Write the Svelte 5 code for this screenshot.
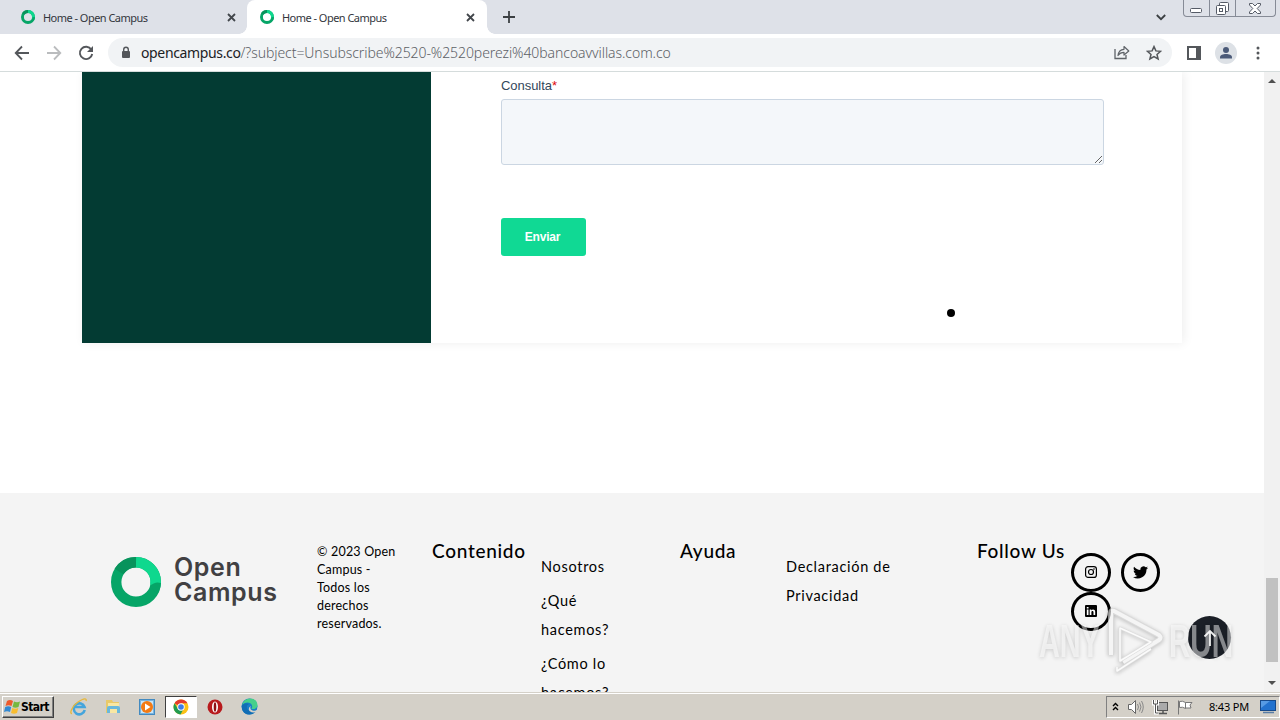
<script lang="ts">
  const tabs = [
    { title: 'Home - Open Campus', active: false },
    { title: 'Home - Open Campus', active: true }
  ];

  const contentLinks = ['Nosotros', '¿Qué hacemos?', '¿Cómo lo hacemos?'];
</script>

{#snippet ring(size: number)}
  <svg width={size} height={size} viewBox="0 0 50 50">
    <circle cx="25" cy="25" r="19.8" fill="none" stroke="#06a567" stroke-width="10.4" />
    <path d="M25 5.2A19.8 19.8 0 0 1 44.6 26.5" fill="none" stroke="#0fd88e" stroke-width="10.4" />
    <path d="M8 14.5A19.8 19.8 0 0 1 25 5.2" fill="none" stroke="#08935c" stroke-width="10.4" />
    <circle cx="44.5" cy="26.5" r="5.2" fill="#0fd88e" />
    <path d="M39 29q5-5 11-3-1 8-4 11z" fill="#06a567" />
  </svg>
{/snippet}

<div class="screen">
  <header class="tabstrip">
    {#each tabs as tab}
      <div class="tab" class:active={tab.active}>
        {@render ring(14)}
        <span class="tab-title">{tab.title}</span>
        <svg class="tab-close" width="9" height="9" viewBox="0 0 9 9"><path d="M1 1l7 7M8 1L1 8" stroke="#42464b" stroke-width="1.8" /></svg>
      </div>
    {/each}
    <svg class="new-tab" width="12" height="12" viewBox="0 0 12 12"><path d="M6 0v12M0 6h12" stroke="#3c4043" stroke-width="1.8" /></svg>
    <svg class="tab-search" width="10" height="7" viewBox="0 0 10 7"><path d="M.8 1l4.2 4.2L9.2 1" fill="none" stroke="#3c4043" stroke-width="1.8" /></svg>
    <div class="window-controls">
      <span class="ctl min"><svg width="13" height="5" viewBox="0 0 13 5"><rect x=".5" y=".5" width="11" height="4" rx="1" fill="#fff" stroke="#555b66" /></svg></span>
      <span class="ctl max"><svg width="13" height="13" viewBox="0 0 13 13"><rect x="3.500" y=".5" width="9" height="9" rx="1" fill="#fff" stroke="#555b66" /><rect x=".5" y="3.500" width="9" height="9" rx="1" fill="#fff" stroke="#555b66" /><rect x="3.500" y="6.500" width="3" height="3" fill="#fff" stroke="#555b66" /></svg></span>
      <span class="ctl close"><svg width="12" height="11" viewBox="0 0 12 11"><path d="M.5.5h3L6 3 8.500.5h3v1.500L8.200 5.500l3.300 3.500v1.500h-3L6 8l-2.500 2.500h-3V9l3.300-3.500L.5 2z" fill="#fff" stroke="#555b66" /></svg></span>
    </div>
  </header>

  <div class="toolbar">
    <div class="nav">
      <svg width="16" height="16" viewBox="0 0 16 16"><path d="M15 8H2M8 1.500L1.700 8 8 14.500" fill="none" stroke="#54575b" stroke-width="1.8" /></svg>
      <svg width="16" height="16" viewBox="0 0 16 16"><path d="M1 8h13M8 1.500L14.300 8 8 14.500" fill="none" stroke="#babcbe" stroke-width="1.8" /></svg>
      <svg width="16" height="16" viewBox="0 0 16 16"><path d="M13.300 4.500A6.200 6.200 0 1 0 14.200 9" fill="none" stroke="#54575b" stroke-width="1.9" /><path d="M15 1v6H9z" fill="#54575b" /></svg>
    </div>
    <div class="omnibox">
      <svg class="lock" width="10" height="13" viewBox="0 0 10 13"><rect x="1" y="5" width="8" height="7" rx="1" fill="#54575b" /><path d="M2.700 6V3.500a2.300 2.300 0 0 1 4.600 0V6" fill="none" stroke="#54575b" stroke-width="1.4" /></svg>
      <span class="url"><b>opencampus.co</b>/?subject=Unsubscribe%2520-%2520perezi%40bancoavvillas.com.co</span>
      <svg class="share" width="16" height="15" viewBox="0 0 16 15"><path d="M1 4v9.500h11V10" fill="none" stroke="#5f6368" stroke-width="1.300" /><path d="M4 10.500C4.500 6.500 7 4.500 10 4.300V1.500L14.800 6 10 10V7.300C7.500 7.300 5.500 8.300 4 10.500z" fill="none" stroke="#5f6368" stroke-width="1.200" stroke-linejoin="round" /></svg>
      <svg width="16" height="16" viewBox="0 0 16 16"><path d="M8 1.600l1.900 4.300 4.700.4-3.600 3.100 1.100 4.600L8 11.600 3.900 14 5 9.400 1.400 6.300l4.700-.4z" fill="none" stroke="#54575b" stroke-width="1.5" /></svg>
    </div>
    <svg class="panel" width="14" height="14" viewBox="0 0 14 14"><rect x="1" y="1" width="12" height="12" fill="#fff" stroke="#54575b" stroke-width="2" /><path d="M9 0h5v14H9z" fill="#54575b" /></svg>
    <svg class="avatar" width="22" height="22" viewBox="0 0 22 22"><circle cx="11" cy="11" r="11" fill="#dde1e6" /><circle cx="11" cy="8" r="3" fill="#4b5a78" /><path d="M5 16.500v-1.300c0-2 3-3.200 6-3.200s6 1.200 6 3.200v1.300z" fill="#4b5a78" /></svg>
    <svg class="dots" width="4" height="14" viewBox="0 0 4 14"><circle cx="2" cy="2" r="1.500" fill="#54575b" /><circle cx="2" cy="7" r="1.500" fill="#54575b" /><circle cx="2" cy="12" r="1.500" fill="#54575b" /></svg>
  </div>

  <div class="viewport">
    <main class="page">
      <section class="contact">
        <div class="contact-side"></div>
        <form class="contact-form">
          <label for="consulta">Consulta<span class="required">*</span></label>
          <textarea id="consulta"></textarea>
          <button type="button">Enviar</button>
        </form>
      </section>

      <footer>
        <div class="logo">
          {@render ring(50)}
          <span>Open<br />Campus</span>
        </div>
        <p class="copyright">© 2023 Open<br />Campus -<br />Todos los<br />derechos<br />reservados.</p>
        <h4>Contenido</h4>
        <ul class="l-content">
          {#each contentLinks as link}
            <li>{link}</li>
          {/each}
        </ul>
        <h4>Ayuda</h4>
        <ul class="l-help"><li>Declaración de Privacidad</li></ul>
        <h4>Follow Us</h4>
        <div class="social">
          <span><svg width="12" height="12" viewBox="0 0 12 12"><rect x=".6" y=".6" width="10.800" height="10.800" rx="2.500" fill="none" stroke="#000" stroke-width="1.200" /><circle cx="6" cy="6" r="2.500" fill="none" stroke="#000" stroke-width="1.200" /><circle cx="9" cy="3" r=".8" /></svg></span>
          <span><svg width="15" height="13" viewBox="0 0 24 20"><path d="M24 2.400c-.9.400-1.800.7-2.800.8 1-.6 1.800-1.600 2.200-2.700-1 .6-2 1-3.100 1.200A4.900 4.900 0 0 0 11.900 6.100C7.800 5.900 4.200 4 1.700.9.400 3.100 1 6 3.200 7.500c-.8 0-1.600-.2-2.200-.6 0 2.300 1.600 4.400 3.900 4.900-.7.200-1.500.2-2.200.1.600 2 2.400 3.400 4.600 3.400A9.900 9.900 0 0 1 0 17.300 13.900 13.900 0 0 0 21.500 5c1-.7 1.800-1.600 2.500-2.600z" /></svg></span>
          <span><svg width="12" height="12" viewBox="0 0 12 12"><rect width="12" height="12" rx="1" /><path d="M1.800 4.600h1.700V10H1.800zM1.800 2h1.700v1.600H1.800zM4.700 4.600h1.600v.8c1-1.400 3.900-1.200 3.900 1.400V10H8.500V7.200c0-1.700-2.100-1.600-2.100 0V10H4.700z" fill="#fff" /></svg></span>
        </div>
      </footer>
      <i class="pointer-dot"></i>
      <a class="to-top" href="#top" aria-label="Arriba"><svg width="14" height="18" viewBox="0 0 14 18"><path d="M7 17V2M1.500 7.500L7 2l5.500 5.500" fill="none" stroke="#fff" stroke-width="1.800" /></svg></a>
      <svg class="watermark" width="204" height="76" viewBox="0 0 204 76">
        <text x="4" y="51" textLength="61" lengthAdjust="spacingAndGlyphs">ANY</text>
        <g fill="none" stroke="#fff" stroke-linejoin="round" transform="translate(-3 -1)">
          <path d="M79 50V8q0-3 3-2l45 24q3 3 0 5L91 57" stroke-width="6" stroke="#ccc" />
          <path d="M79 50V8q0-3 3-2l45 24q3 3 0 5L91 57" stroke-width="4" stroke="#f6f6f6" />
          <path d="M88 23v33l31-19zM85 62v4l34-22" stroke-width="3" stroke="#d2d2d2" />
          <path d="M88 23v33l31-19zM85 62v4l34-22" stroke-width="1.500" />
        </g>
        <text x="134" y="51" textLength="64" lengthAdjust="spacingAndGlyphs">RUN</text>
      </svg>
    </main>
    <aside class="scrollbar">
      <i class="arrow up"></i>
      <i class="thumb"></i>
      <i class="arrow down"></i>
    </aside>
  </div>

  <div class="taskbar">
    <div class="start">
      <svg width="17" height="16" viewBox="0 0 17 16"><path d="M3 2q3-2 6 0L7.500 7q-3-1.500-6 0z" fill="#ee5a2b" /><path d="M10 2.500q3 1.500 6 0L14.500 8q-3 1.500-6 0z" fill="#76b83f" /><path d="M1.200 8q3-1.500 6 0L6 13q-3-1.500-6 0z" fill="#3289d2" /><path d="M8.300 9q3 1.500 6 0L13 14q-3 1.500-6 0z" fill="#f8bd30" /></svg>
      <span>Start</span>
    </div>
    <div class="task"><svg width="18" height="18" viewBox="0 0 18 18"><path d="M14.700 12A5.500 5.500 0 1 1 14.500 9H5" fill="none" stroke="#45a5dc" stroke-width="2.600" /><path d="M2 15.500C-1 16 2 8 8 4s9-4 8-1" fill="none" stroke="#e7b83c" stroke-width="1.400" /></svg></div>
    <div class="task"><svg width="16" height="17" viewBox="0 0 16 17"><path d="M1 2h6l1 2h6v11H1z" fill="#e9c968" /><path d="M3 5h11v10H3z" fill="#f8e7a3" /><path d="M2 15V10q0-2 2-2h9q2 0 2 2v5h-3v-4H5v4z" fill="#69b8dc" /></svg></div>
    <div class="task"><svg width="16" height="16" viewBox="0 0 16 16"><rect x=".5" y=".5" width="15" height="15" fill="#79b4df" stroke="#438ac0" /><rect x="2" y="2" width="12" height="12" fill="#c9e6f8" /><circle cx="8" cy="8" r="6" fill="#f37a13" /><path d="M6 4.500v7L11.500 8z" fill="#fff" /></svg></div>
    <div class="task pressed"><svg width="16" height="16" viewBox="0 0 16 16"><circle cx="8" cy="8" r="7.500" fill="#fbc116" /><path d="M8 8L1.500 4.200A7.500 7.500 0 0 1 14.500 4.200H8z" fill="#e33b2e" /><path d="M1.500 4.200A7.500 7.500 0 0 0 7.500 15.500L10.500 10 5 10z" fill="#219b50" /><circle cx="8" cy="8" r="3.700" fill="#fff" /><circle cx="8" cy="8" r="2.800" fill="#3c7de8" /></svg></div>
    <div class="task"><svg width="16" height="16" viewBox="0 0 16 16"><circle cx="8" cy="8" r="7.500" fill="#b81a1d" /><ellipse cx="8" cy="8" rx="3" ry="5.500" fill="#fff" /><ellipse cx="8" cy="8" rx="1.300" ry="4.700" fill="#8f1014" /></svg></div>
    <div class="task"><svg width="17" height="17" viewBox="0 0 17 17"><circle cx="8.500" cy="8.500" r="8" fill="#177ec8" /><path d="M1 7Q3 .5 9 .5q7 0 7.500 7-.5 4-6 3.500 2-4-1.500-6Q5 3.500 1 7z" fill="#45cf8b" /><path d="M1 7q4-3 7-1-4 2-1 6 4 3 8 1-4 5-10 3-5-3-4-9z" fill="#116db5" /><path d="M10 8q-2 3 1.500 4.500 3 .8 5-1l-1 2.500q-4 1.500-7-1-2-3 1.500-5z" fill="#d4d0c8" /></svg></div>
    <div class="tray">
      <svg width="7" height="9" viewBox="0 0 7 9"><path d="M1 4l2.500-2.500L6 4M1 8l2.500-2.500L6 8" fill="none" stroke="#000" stroke-width="1.400" /></svg>
      <svg width="17" height="16" viewBox="0 0 17 16"><path d="M1.500 5.500h3L8.500 1.500v13l-4-4h-3z" fill="#fff" stroke="#666" /><path d="M10.500 5q2 3 0 6M12.500 3.500q3 4.500 0 9M14.500 2q3.500 6 0 12" fill="none" stroke="#888" /></svg>
      <svg width="17" height="16" viewBox="0 0 17 16"><rect x="5.500" y="3.500" width="10" height="8" fill="#aaa" stroke="#555" /><path d="M7 14.500h8M11 11v3" stroke="#555" stroke-width="1.500" /><path d="M1.500 1v4h4V1M3.500 5v9h3" fill="none" stroke="#fff" stroke-width="3" /><path d="M1.500 1v4h4V1M3.500 5v9h3" fill="none" stroke="#555" /></svg>
      <svg width="17" height="16" viewBox="0 0 17 16"><path d="M1.500 1.500v14M2.500 2.500q3-1 6 1v6q-3-2-6-1zM8.500 3.500H15L13 6l1 3H8.500" fill="#fff" stroke="#777" /></svg>
      <span class="clock">8:43 PM</span>
      <svg width="16" height="14" viewBox="0 0 16 14"><rect x=".5" y=".5" width="15" height="10" fill="#2372ce" stroke="#174a8b" /><path d="M1 1h9L1 8z" fill="#579be4" /><path d="M3 12.500h11" stroke="#5a7da5" stroke-width="1.500" /></svg>
    </div>
  </div>
</div>

<style>
  :global(body) {
    margin: 0;
    overflow: hidden;
  }

  .screen {
    width: 1280px;
    height: 720px;
    display: flex;
    flex-direction: column;
    overflow: hidden;
    background: #fff;
    font-family: 'Noto Sans', sans-serif;
  }

  svg {
    display: block;
    flex: none;
  }

  .tabstrip {
    height: 34px;
    flex: none;
    display: flex;
    align-items: center;
    background: #dee1e8;
  }

  .tab {
    position: relative;
    box-sizing: border-box;
    width: 240px;
    height: 34px;
    display: flex;
    align-items: center;
    padding: 0 12px 0 13px;
  }

  .tab:first-child {
    width: 247px;
    padding: 0 11px 0 21px;
  }

  .tab.active {
    background: #fff;
    border-radius: 8px 8px 0 0;
  }

  .tab.active::before,
  .tab.active::after {
    content: '';
    position: absolute;
    bottom: 0;
    left: -8px;
    width: 8px;
    height: 8px;
    background: radial-gradient(circle at 0 0, transparent 7.5px, #fff 8px);
  }

  .tab.active::after {
    left: auto;
    right: -8px;
    background: radial-gradient(circle at 100% 0, transparent 7.5px, #fff 8px);
  }

  .tab-title {
    margin-left: 8px;
    font-size: 11px;
    letter-spacing: -0.53px;
    color: #33363c;
    white-space: nowrap;
  }

  .tab-close {
    margin-left: auto;
  }

  .new-tab {
    margin-left: 16px;
  }

  .tab-search {
    margin-left: auto;
  }

  .window-controls {
    align-self: flex-start;
    box-sizing: border-box;
    display: flex;
    width: 93px;
    height: 17px;
    margin: 0 4px 0 17px;
    border: 1px solid #868b96;
    border-top: 0;
    border-radius: 0 0 4px 4px;
  }

  .ctl {
    display: flex;
    align-items: center;
    justify-content: center;
    flex: 1 0 25px;
    border-right: 1px solid #868b96;
  }

  .ctl.min {
    padding-top: 4px;
  }

  .ctl.close {
    flex-basis: 42px;
    box-sizing: border-box;
    padding-right: 4px;
    border: 0;
  }

  .toolbar {
    box-sizing: border-box;
    height: 38px;
    flex: none;
    display: flex;
    align-items: center;
    border-bottom: 1px solid #d5dcdc;
    background: #fff;
  }

  .nav {
    display: flex;
    gap: 16px;
    padding: 0 14px;
  }

  .omnibox {
    box-sizing: border-box;
    width: 1064px;
    height: 29px;
    display: flex;
    align-items: center;
    padding: 0 10px 0 13px;
    border-radius: 15px;
    background: #f1f3f5;
  }

  .url {
    margin-left: 10px;
    font-size: 14px;
    font-weight: 300;
    letter-spacing: -0.07px;
    color: #5c6065;
    white-space: nowrap;
  }

  .url b {
    font-weight: 400;
    letter-spacing: -0.36px;
    color: #202124;
  }

  .share {
    margin-left: auto;
    margin-right: 16px;
  }

  .panel {
    margin-left: 15px;
  }

  .avatar {
    margin-left: 14px;
  }

  .dots {
    margin-left: 19px;
  }

  .viewport {
    flex: 1;
    min-height: 0;
    display: flex;
  }

  .page {
    position: relative;
    width: 1264px;
    overflow: hidden;
    display: flex;
    flex-direction: column;
  }

  .contact {
    width: 1100px;
    height: 271px;
    flex: none;
    display: flex;
    margin: 0 82px 150px;
    box-shadow: 2px 0 10px rgba(0, 0, 0, 0.07);
  }

  .contact-side {
    width: 349px;
    background: #033b33;
  }

  .contact-form {
    display: flex;
    flex-direction: column;
    align-items: flex-start;
    padding: 5px 0 0 70px;
    font-family: 'Liberation Sans', Arial, sans-serif;
  }

  label {
    height: 22px;
    font-size: 13px;
    line-height: 18px;
    letter-spacing: -0.05px;
    color: #33475b;
  }

  .required {
    color: #e00b0b;
  }

  textarea {
    box-sizing: border-box;
    width: 603px;
    height: 66px;
    margin: 0 0 53px;
    border: 1px solid #cbd6e2;
    border-radius: 3px;
    background: #f4f7fa;
    resize: both;
  }

  button {
    width: 85px;
    height: 38px;
    padding: 0 2px 0 0;
    border: 0;
    border-radius: 3px;
    background: #10d994;
    color: #fff;
    font: 700 12px/14px 'Liberation Sans', Arial, sans-serif;
    letter-spacing: -0.2px;
  }

  footer {
    flex: 1;
    display: grid;
    grid-template-columns: 206px 115px 109px 139px 106px 191px 94px 100px;
    align-items: start;
    padding-left: 111px;
    background: #f4f4f4;
    color: #000;
    font-family: 'Lato', sans-serif;
  }

  footer > * {
    white-space: nowrap;
  }

  .logo {
    display: flex;
    gap: 13px;
    margin-top: 64px;
    font: 600 25px/25px 'Inter', sans-serif;
    letter-spacing: 0.6px;
    color: #414042;
  }

  .logo span {
    margin-top: -2px;
  }

  .copyright {
    margin: 50px 0 0;
    font-size: 12.5px;
    line-height: 18px;
    letter-spacing: 0.2px;
  }

  h4 {
    margin: 46px 0 0;
    font-size: 19px;
    line-height: 24px;
    font-weight: 500;
    letter-spacing: 0.7px;
  }

  ul {
    margin: 59px 0 0;
    padding: 0;
    list-style: none;
    font-size: 14.5px;
    line-height: 29px;
    letter-spacing: 0.7px;
  }

  li {
    margin-bottom: 5px;
    white-space: normal;
  }

  .l-content li {
    width: 80px;
  }

  .l-help li {
    width: 115px;
  }

  .social {
    display: flex;
    flex-wrap: wrap;
    column-gap: 10px;
    margin-top: 60px;
  }

  .social span {
    box-sizing: border-box;
    width: 40px;
    height: 39px;
    display: grid;
    place-items: center;
    padding-bottom: 1px;
    border: 3px solid #000;
    border-radius: 50%;
  }

  .social span:nth-child(2) {
    width: 39px;
    padding-right: 1px;
  }

  .pointer-dot {
    position: absolute;
    left: 947px;
    top: 237px;
    width: 8px;
    height: 8px;
    border-radius: 50%;
    background: #000;
  }

  .to-top {
    position: absolute;
    left: 1188px;
    top: 544px;
    width: 43px;
    height: 43px;
    display: grid;
    place-items: center;
    border-radius: 50%;
    background: #1b1f27;
  }

  .watermark {
    position: absolute;
    left: 1035px;
    top: 534px;
    opacity: 0.65;
    filter: drop-shadow(0 1px 2px rgba(0, 0, 0, 0.35));
  }

  .watermark text {
    font: 700 47px 'Liberation Sans', sans-serif;
    fill: #f8f8f8;
    opacity: 0.75;
  }

  .scrollbar {
    width: 16px;
    display: flex;
    flex-direction: column;
    align-items: center;
    background: #f1f1f1;
  }

  .arrow {
    border: 4px solid transparent;
  }

  .arrow.up {
    margin-top: 3px;
    border-bottom-color: #505050;
  }

  .arrow.down {
    margin-top: 19px;
    border-top-color: #505050;
  }

  .thumb {
    width: 12px;
    height: 84px;
    margin-top: 495px;
    background: #c1c1c1;
  }

  .taskbar {
    box-sizing: border-box;
    height: 28px;
    flex: none;
    display: flex;
    align-items: center;
    padding: 0 0 0 2px;
    border-top: 1px solid #d4d0c8;
    box-shadow: inset 0 1px #fff;
    background: #d4d0c8;
  }

  .start {
    box-sizing: border-box;
    width: 52px;
    height: 22px;
    display: flex;
    align-items: center;
    margin-right: 8px;
    padding-left: 1px;
    border: 1px solid;
    border-color: #fff #404040 #404040 #fff;
    box-shadow: inset -1px -1px #808080;
    font: 700 12px 'DejaVu Sans Condensed', 'DejaVu Sans', sans-serif;
    letter-spacing: -0.6px;
  }

  .task {
    box-sizing: border-box;
    width: 32px;
    height: 22px;
    margin: 0 1px;
    display: grid;
    place-items: center;
  }

  .pressed {
    border: 1px solid;
    border-color: #404040 #fff #fff #404040;
    background: #fff;
  }

  .tray {
    box-sizing: border-box;
    width: 174px;
    height: 22px;
    display: flex;
    align-items: center;
    gap: 8px;
    margin-left: auto;
    padding-left: 5px;
    border: 1px solid;
    border-color: #808080 #fff #fff #808080;
  }

  .clock {
    margin-left: 7px;
    width: 43px;
    font-size: 11px;
    letter-spacing: -0.2px;
    white-space: nowrap;
  }
</style>
